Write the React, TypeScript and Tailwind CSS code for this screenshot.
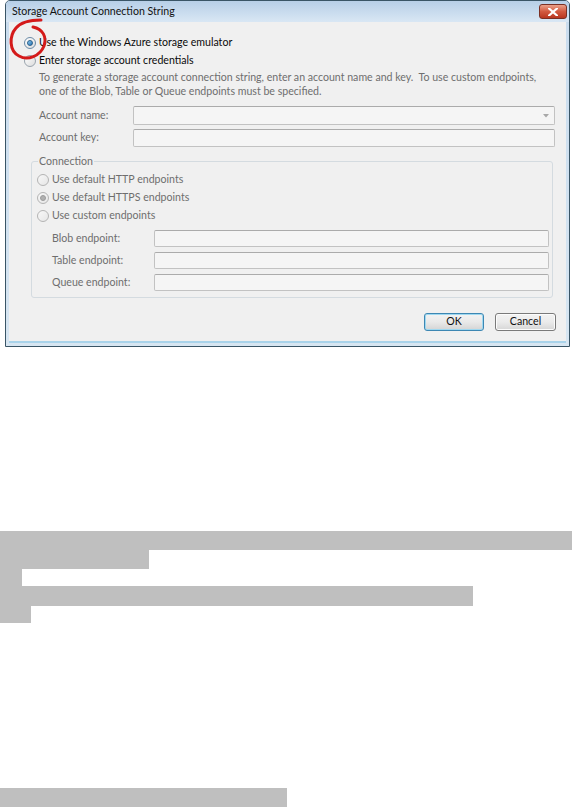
import React from "react";

const FONT = { fontFamily: "Lato, 'Noto Sans', 'Liberation Sans', sans-serif" };

function Radio({ checked, disabled }: { checked?: boolean; disabled?: boolean }) {
  if (disabled) {
    return (
      <div className="w-[12px] h-[12px] rounded-full border border-[#b4b4b4] bg-gradient-to-br from-[#f8f8f8] to-[#e6e6e6] flex items-center justify-center shrink-0">
        {checked && <div className="w-[6px] h-[6px] rounded-full bg-[#b0b0b0] border border-[#9c9c9c]" />}
      </div>
    );
  }
  return (
    <div
      className={
        "w-[12px] h-[12px] rounded-full border flex items-center justify-center shrink-0 bg-gradient-to-br from-[#ffffff] to-[#dcdcdc] " +
        (checked ? "border-[#6a8aa6]" : "border-[#9aa4ad]")
      }
    >
      {checked && <div className="w-[6px] h-[6px] rounded-full bg-gradient-to-br from-[#8fd0f5] to-[#1f6fb0] border border-[#2a5f8a]" />}
    </div>
  );
}

function Input({ combo }: { combo?: boolean }) {
  return (
    <div className="flex-1 h-full border border-[#c2c2c2] border-t-[#ababab] bg-[#f5f5f5] rounded-[2px] flex items-center justify-end pr-[5px]">
      {combo && (
        <svg width="6" height="4" viewBox="0 0 6 4">
          <path d="M0 0 L6 0 L3 3.5 Z" fill="#a8a8a8" />
        </svg>
      )}
    </div>
  );
}

export default function App() {
  return (
    <div className="relative w-[572px] h-[807px] bg-white overflow-hidden text-[10.6px]" style={FONT}>
      {/* Dialog window */}
      <div className="ml-[5px] w-[565px] h-[347px] border border-[#3a5566] rounded-t-[5px] bg-gradient-to-b from-[#c9dcee] to-[#d7e6f2] flex flex-col">
        <div className="h-[21px] flex items-start justify-between bg-gradient-to-b from-[#b7cfe7] to-[#d9e7f4] rounded-t-[4px]">
          <div className="pl-[6px] h-[21px] flex items-center text-[#111]">
            Storage Account Connection String
          </div>
          <div className="mt-[3px] mr-[2px] w-[28px] h-[15px] rounded-[3px] border border-[#7b3024] bg-gradient-to-b from-[#e9a08a] via-[#d2593f] to-[#b9361f] flex items-center justify-center">
            <svg width="10" height="8" viewBox="0 0 10 8">
              <path d="M1 0.5 L9 7.5 M9 0.5 L1 7.5" stroke="#ffffff" strokeWidth="2.2" strokeLinecap="square" />
            </svg>
          </div>
        </div>
        <div className="px-[3px] pb-[3px] flex-1 flex flex-col">
          <div className="flex-1 bg-[#f0f0f0] flex flex-col border-b-[2px] border-b-[#a9d3ea]">
            <div className="pt-[12px] pl-[15px] flex items-center h-[30px] gap-[3px] text-[#0a0a0a]">
              <Radio checked />
              <span>Use the Windows Azure storage emulator</span>
            </div>
            <div className="pl-[15px] flex items-center h-[18px] gap-[3px] text-[#0a0a0a]">
              <Radio />
              <span>Enter storage account credentials</span>
            </div>
            <div className="pl-[30px] leading-[14px] text-[#6e6e6e]">
              <div>To generate a storage account connection string, enter an account name and key.&nbsp; To use custom endpoints,</div>
              <div>one of the Blob, Table or Queue endpoints must be specified.</div>
            </div>
            <div className="mt-[8px] pl-[30px] pr-[11px] h-[19px] flex items-center text-[#6e6e6e]">
              <div className="w-[94px]">Account name:</div>
              <Input combo />
            </div>
            <div className="mt-[4px] pl-[30px] pr-[11px] h-[18px] flex items-center text-[#6e6e6e]">
              <div className="w-[94px]">Account key:</div>
              <Input />
            </div>
            <fieldset className="mt-[8px] ml-[22px] mr-[13px] border border-[#d4dbe0] rounded-[3px] pb-[6px] text-[#6e6e6e]">
              <legend className="ml-[6px] px-[1px] leading-[12px]">Connection</legend>
              <div className="pt-[4px] pl-[5px]">
                <div className="h-[18px] flex items-center gap-[3px]">
                  <Radio disabled />
                  <span>Use default HTTP endpoints</span>
                </div>
                <div className="h-[18px] flex items-center gap-[3px]">
                  <Radio disabled checked />
                  <span>Use default HTTPS endpoints</span>
                </div>
                <div className="h-[18px] flex items-center gap-[3px]">
                  <Radio disabled />
                  <span>Use custom endpoints</span>
                </div>
              </div>
              <div className="mt-[5px] pl-[20px] pr-[3px] h-[17px] flex items-center">
                <div className="w-[102px]">Blob endpoint:</div>
                <Input />
              </div>
              <div className="mt-[5px] pl-[20px] pr-[3px] h-[17px] flex items-center">
                <div className="w-[102px]">Table endpoint:</div>
                <Input />
              </div>
              <div className="mt-[5px] pl-[20px] pr-[3px] h-[17px] flex items-center">
                <div className="w-[102px]">Queue endpoint:</div>
                <Input />
              </div>
            </fieldset>
            <div className="mt-[15px] pr-[10px] flex justify-end gap-[11px]">
              <div className="w-[60px] h-[18px] rounded-[3px] border border-[#3d87b3] bg-gradient-to-b from-[#f3f3f3] via-[#e9e9e9] to-[#d4d4d4] flex items-center justify-center text-[#111] shadow-[inset_0_0_0_1px_#9fd8f0]">
                OK
              </div>
              <div className="w-[61px] h-[18px] rounded-[3px] border border-[#7a7a7a] bg-gradient-to-b from-[#f3f3f3] via-[#ebebeb] to-[#d6d6d6] flex items-center justify-center text-[#111] shadow-[inset_0_0_0_1px_#fcfcfc]">
                Cancel
              </div>
            </div>
          </div>
        </div>
      </div>

      {/* Grey selection blocks */}
      <div className="mt-[184px] flex flex-col">
        <div className="w-full h-[19px] bg-[#bfbfbf]" />
        <div className="w-[149px] h-[19px] bg-[#bfbfbf]" />
        <div className="w-[22px] h-[17px] bg-[#bfbfbf]" />
        <div className="w-[473px] h-[20px] bg-[#bfbfbf]" />
        <div className="w-[31px] h-[17px] bg-[#bfbfbf]" />
        <div className="mt-[165px] w-[287px] h-[19px] bg-[#bfbfbf]" />
      </div>

      {/* Red annotation circle */}
      <svg className="absolute left-0 top-0" width="60" height="70" viewBox="0 0 60 70">
        <path
          d="M41 20 C33 20 22 21 16 28 C9 36 9 51 19 56 C28 61 40 56 44 46 C47 37 43 29 33 27"
          fill="none"
          stroke="#d41a1a"
          strokeWidth="3"
          strokeLinecap="round"
        />
      </svg>
    </div>
  );
}
